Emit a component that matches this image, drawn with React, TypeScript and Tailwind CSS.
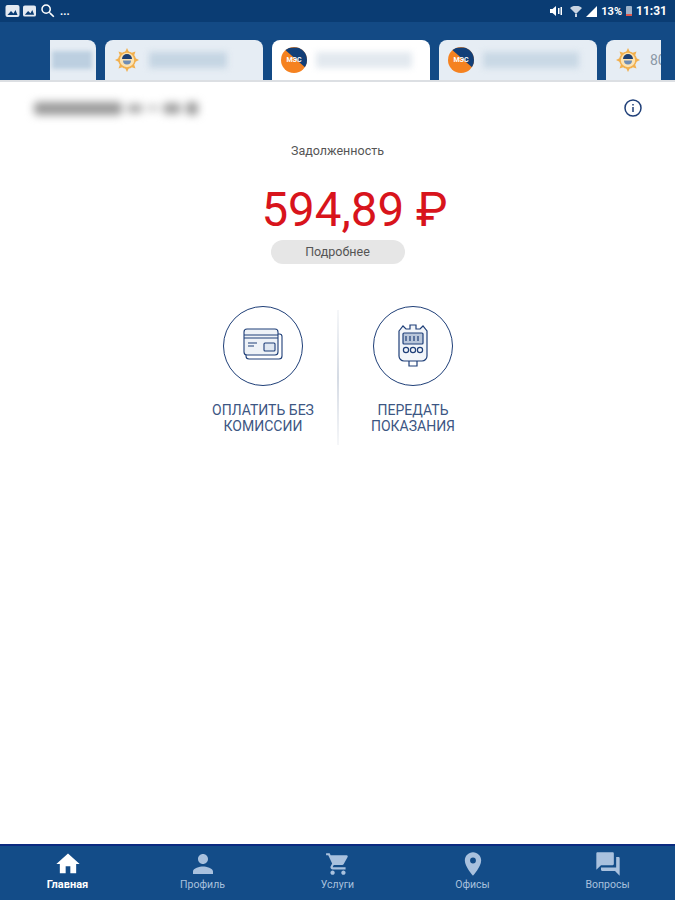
import { MdHome, MdLocationOn, MdPerson, MdQuestionAnswer, MdSearch, MdShoppingCart } from "react-icons/md";

function SunLogo() {
  const rays = [0, 45, 90, 135, 180, 225, 270, 315];
  return (
    <svg width="26" height="26" viewBox="0 0 26 26" className="shrink-0">
      {rays.map((r) => (
        <path key={r} d="M13 1l2.4 5h-4.8z" fill="#f2b04e" transform={`rotate(${r} 13 13)`} />
      ))}
      <circle cx="13" cy="13" r="8" fill="#fbe3b4" stroke="#f2b04e" strokeWidth="1.6" />
      <path d="M8 12a5 5 0 0 1 10 0z" fill="#1d3f73" />
      <path d="M9 13.5h8a4 4 0 0 1-8 0z" fill="#6f8db5" />
    </svg>
  );
}

function MesLogo() {
  return (
    <div className="relative flex h-[26px] w-[26px] shrink-0 items-center justify-center overflow-hidden rounded-full bg-[#f58220]">
      <svg width="26" height="26" viewBox="0 0 26 26" className="absolute inset-0">
        <path d="M2 1L26 22V0z" fill="#123f78" />
      </svg>
      <span className="relative text-[7px] font-bold leading-none text-white">МЭС</span>
    </div>
  );
}

function Tab({ logo, active, bar }: { logo: "sun" | "mes"; active?: boolean; bar: string }) {
  return (
    <div
      className={`flex h-10 w-[158px] shrink-0 items-center gap-[9px] rounded-t-lg pl-[9px] ${
        active ? "bg-white" : "bg-[#e6edf4]"
      }`}
    >
      {logo === "sun" ? <SunLogo /> : <MesLogo />}
      <div className={`h-4 blur-[3px] ${bar}`} />
    </div>
  );
}

function PictureIcon({ width }: { width: number }) {
  return (
    <svg width={width} height="12" viewBox="0 0 14 12">
      <rect width="14" height="12" rx="2" fill="#e4eaf2" />
      <path d="M2 10l3.500-4 2.500 2.500L10 5l2 5z" fill="#0a3c73" />
    </svg>
  );
}

function CardIcon() {
  return (
    <svg width="40" height="36" viewBox="0 0 40 36" fill="none" stroke="#1f3f78" strokeWidth="1.1">
      <rect x="1" y="1" width="34" height="26" rx="3" fill="#eef2f7" />
      <path d="M35 6h1.5A2.5 2.5 0 0 1 39 8.500V28a3 3 0 0 1-3 3H6a3 3 0 0 1-3-3v-1" />
      <path d="M1 7h34M1 10h34" />
      <path d="M5 15h9M5 18h6" />
      <rect x="21" y="15" width="11" height="8" rx="1" fill="#dfe7f1" />
    </svg>
  );
}

function MeterIcon() {
  return (
    <svg width="34" height="48" viewBox="0 0 34 48" fill="none" stroke="#1f3f78" strokeWidth="1.2">
      <path d="M3 9l4-5 3 3h4V3h6v4h4l3-3 4 5v25a5 5 0 0 1-5 5H8a5 5 0 0 1-5-5z" fill="#f2f5f9" />
      <rect x="7" y="11" width="20" height="11" rx="1" fill="#b9c6da" />
      <path d="M10 14v5M14 14v5M18 14v5M22 14v5" />
      <circle cx="10" cy="28" r="2.600" />
      <circle cx="17" cy="28" r="2.600" />
      <circle cx="24" cy="28" r="2.600" />
      <path d="M13 39v5h8v-5" />
    </svg>
  );
}

function ActionButton({ lines, children }: { lines: string[]; children: React.ReactNode }) {
  return (
    <div className="flex w-[150px] flex-col items-center">
      <div className="flex h-20 w-20 items-center justify-center rounded-full border-[1.5px] border-[#1f3f78]">
        {children}
      </div>
      <div className="mt-4 text-center text-sm leading-4 text-[#3c5683]">
        {lines.map((l) => (
          <div key={l}>{l}</div>
        ))}
      </div>
    </div>
  );
}

function NavItem({ label, active, children }: { label: string; active?: boolean; children: React.ReactNode }) {
  return (
    <div className={`flex flex-col items-center pt-[5px] ${active ? "text-white" : "text-[#a9c1de]"}`}>
      <div className="flex h-[26px] items-center justify-center">{children}</div>
      <div className={`leading-4 ${active ? "text-[11px] font-bold" : "text-[10.500px]"}`}>{label}</div>
    </div>
  );
}

export default function App() {
  return (
    <div className="flex h-[900px] w-[675px] flex-col overflow-hidden bg-white font-['Roboto',sans-serif]">
      {/* status bar */}
      <div className="flex h-[22px] items-center justify-between bg-[#0a3c73] pl-[5px] pr-2 text-white">
        <div className="flex items-center gap-[3px]">
          <PictureIcon width={15} />
          <PictureIcon width={13} />
          <MdSearch size={18} />
          <span className="text-[11px] font-bold leading-none">...</span>
        </div>
        <div className="flex items-center gap-1 text-[11px] font-bold leading-none">
          <svg width="12" height="10" viewBox="0 0 12 10" fill="white">
            <path d="M0 3h2.500L6 0v10L2.500 7H0zM8 2h1.500v6H8zM10.500 1H12v8h-1.500z" />
          </svg>
          <svg width="12" height="11" viewBox="0 0 12 11" fill="#c9d4e2" className="ml-1">
            <path d="M0 2a9 9 0 0 1 12 0L6 8zM5 8h2v3H5z" />
          </svg>
          <svg width="11" height="11" viewBox="0 0 11 11" fill="white">
            <path d="M11 0v11H0z" />
          </svg>
          <span>13%</span>
          <div className="flex h-[10px] w-[6px] flex-col justify-end rounded-[1px] bg-[#9fb2c9]">
            <div className="h-[2px] bg-[#e2574c]" />
          </div>
          <span className="text-xs">11:31</span>
        </div>
      </div>

      {/* account tabs */}
      <div className="h-[58px] bg-[#134a85] pl-[50px] pt-[18px]">
        <div className="flex h-10 w-[611px] gap-[9px] overflow-hidden">
          <div className="flex h-10 w-[46px] shrink-0 items-center justify-end rounded-tr-lg bg-[#e6edf4] pr-[4px]">
            <div className="h-[18px] w-[40px] bg-[#bccfe0] blur-[2px]" />
          </div>
          <Tab logo="sun" bar="w-[78px] bg-[#c5d5e3]" />
          <Tab logo="mes" active bar="w-[96px] bg-[#e3e9ef]" />
          <Tab logo="mes" bar="w-[96px] bg-[#c9d8e5]" />
          <div className="flex h-10 w-[55px] shrink-0 items-center gap-[9px] overflow-hidden rounded-tl-lg bg-[#e6edf4] pl-[9px]">
            <SunLogo />
            <span className="text-sm text-[#8b98a6]">80</span>
          </div>
        </div>
      </div>

      {/* main */}
      <div className="flex flex-1 flex-col border-t-2 border-[#dcdfe3]">
        <div className="flex items-center justify-between pl-[34px] pr-[33px] pt-[17px]">
          <div className="flex items-center gap-[5px] blur-[4px]">
            <div className="h-[13px] w-[88px] rounded bg-[#999]" />
            <div className="h-[9px] w-[16px] rounded bg-[#aaa]" />
            <div className="h-[6px] w-[10px] rounded bg-[#bbb]" />
            <div className="h-[11px] w-[18px] rounded bg-[#a0a0a0]" />
            <div className="h-[13px] w-[12px] rounded bg-[#999]" />
          </div>
          <svg width="18" height="18" viewBox="0 0 18 18" fill="none" stroke="#1f3f78" strokeWidth="1.500">
            <circle cx="9" cy="9" r="8" />
            <path d="M9 8v5M9 5v1.500" />
          </svg>
        </div>

        <div className="mt-[26px] text-center text-[12.500px] leading-4 text-[#555]">Задолженность</div>
        <div className="mt-[23px] pl-[34px] text-center text-[47.500px] leading-[56px] text-[#d8141c]">594,89 ₽</div>
        <div className="mx-auto mt-[2px] flex h-6 w-[134px] items-center justify-center rounded-full bg-[#e6e6e6] pt-px text-[12.500px] text-[#555]">
          Подробнее
        </div>

        <div className="mt-[42px] flex justify-center pl-px">
          <ActionButton lines={["ОПЛАТИТЬ БЕЗ", "КОМИССИИ"]}>
            <CardIcon />
          </ActionButton>
          <div className="-ml-px -mr-px mt-[4px] h-[135px] w-[2px] bg-gradient-to-b from-[#f6f7f9] via-[#d5dbe4] to-[#f6f7f9]" />
          <ActionButton lines={["ПЕРЕДАТЬ", "ПОКАЗАНИЯ"]}>
            <MeterIcon />
          </ActionButton>
        </div>
      </div>

      {/* bottom nav */}
      <div className="grid h-[56px] grid-cols-5 border-t-2 border-[#0b2a80] bg-[#134c88]">
        <NavItem label="Главная" active>
          <MdHome size={28} />
        </NavItem>
        <NavItem label="Профиль">
          <MdPerson size={30} />
        </NavItem>
        <NavItem label="Услуги">
          <MdShoppingCart size={26} />
        </NavItem>
        <NavItem label="Офисы">
          <MdLocationOn size={28} />
        </NavItem>
        <NavItem label="Вопросы">
          <MdQuestionAnswer size={28} />
        </NavItem>
      </div>
    </div>
  );
}
